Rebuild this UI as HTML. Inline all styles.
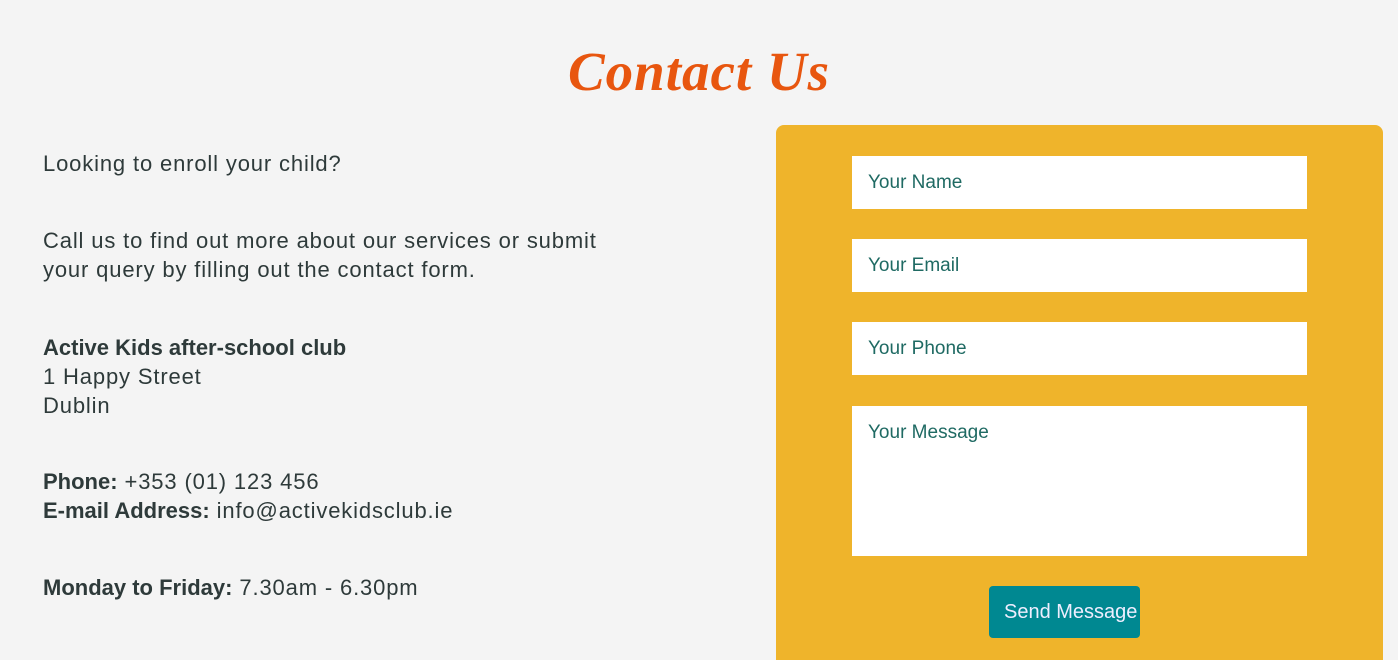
<!DOCTYPE html>
<html><head><meta charset="utf-8"><style>
html,body{margin:0;width:1398px;height:660px;overflow:hidden}
body{background:#f4f4f4;font-family:"Liberation Sans",sans-serif;position:relative}
h1{position:absolute;left:0;width:1398px;top:40px;margin:0;text-align:center;font-family:"Liberation Serif",serif;font-style:italic;font-weight:bold;font-size:55px;color:#e8560f;letter-spacing:1px}
.t{position:absolute;left:43px;font-size:22px;line-height:29px;color:#2e3a3a;letter-spacing:0.85px;white-space:nowrap}
b{font-weight:bold;letter-spacing:0}
.panel{position:absolute;left:776px;top:125px;width:607px;height:535px;background:#efb42b;border-radius:8px 8px 0 0}
.f{position:absolute;left:852px;width:455px;background:#fff;color:#1f6a63;font-size:19px;box-sizing:border-box;padding-left:16px}
.btn{position:absolute;left:989px;top:586px;width:151px;height:52px;background:#008891;border-radius:4px;color:#eef;font-size:20px;line-height:52px;text-indent:15px;white-space:nowrap;overflow:hidden}
</style></head><body>
<h1>Contact Us</h1>
<div class="t" style="top:149px">Looking to enroll your child?</div>
<div class="t" style="top:226px">Call us to find out more about our services or submit<br>your query by filling out the contact form.</div>
<div class="t" style="top:333px"><b>Active Kids after-school club</b><br>1 Happy Street<br>Dublin</div>
<div class="t" style="top:467px"><b>Phone:</b> +353 (01) 123 456<br><b>E-mail Address:</b> info@activekidsclub.ie</div>
<div class="t" style="top:573px"><b>Monday to Friday:</b> 7.30am - 6.30pm</div>
<div class="panel"></div>
<div class="f" style="top:156px;height:53px;line-height:53px">Your Name</div>
<div class="f" style="top:239px;height:53px;line-height:53px">Your Email</div>
<div class="f" style="top:322px;height:53px;line-height:53px">Your Phone</div>
<div class="f" style="top:406px;height:150px;padding-top:16px">Your Message</div>
<div class="btn">Send Message</div>
</body></html>
